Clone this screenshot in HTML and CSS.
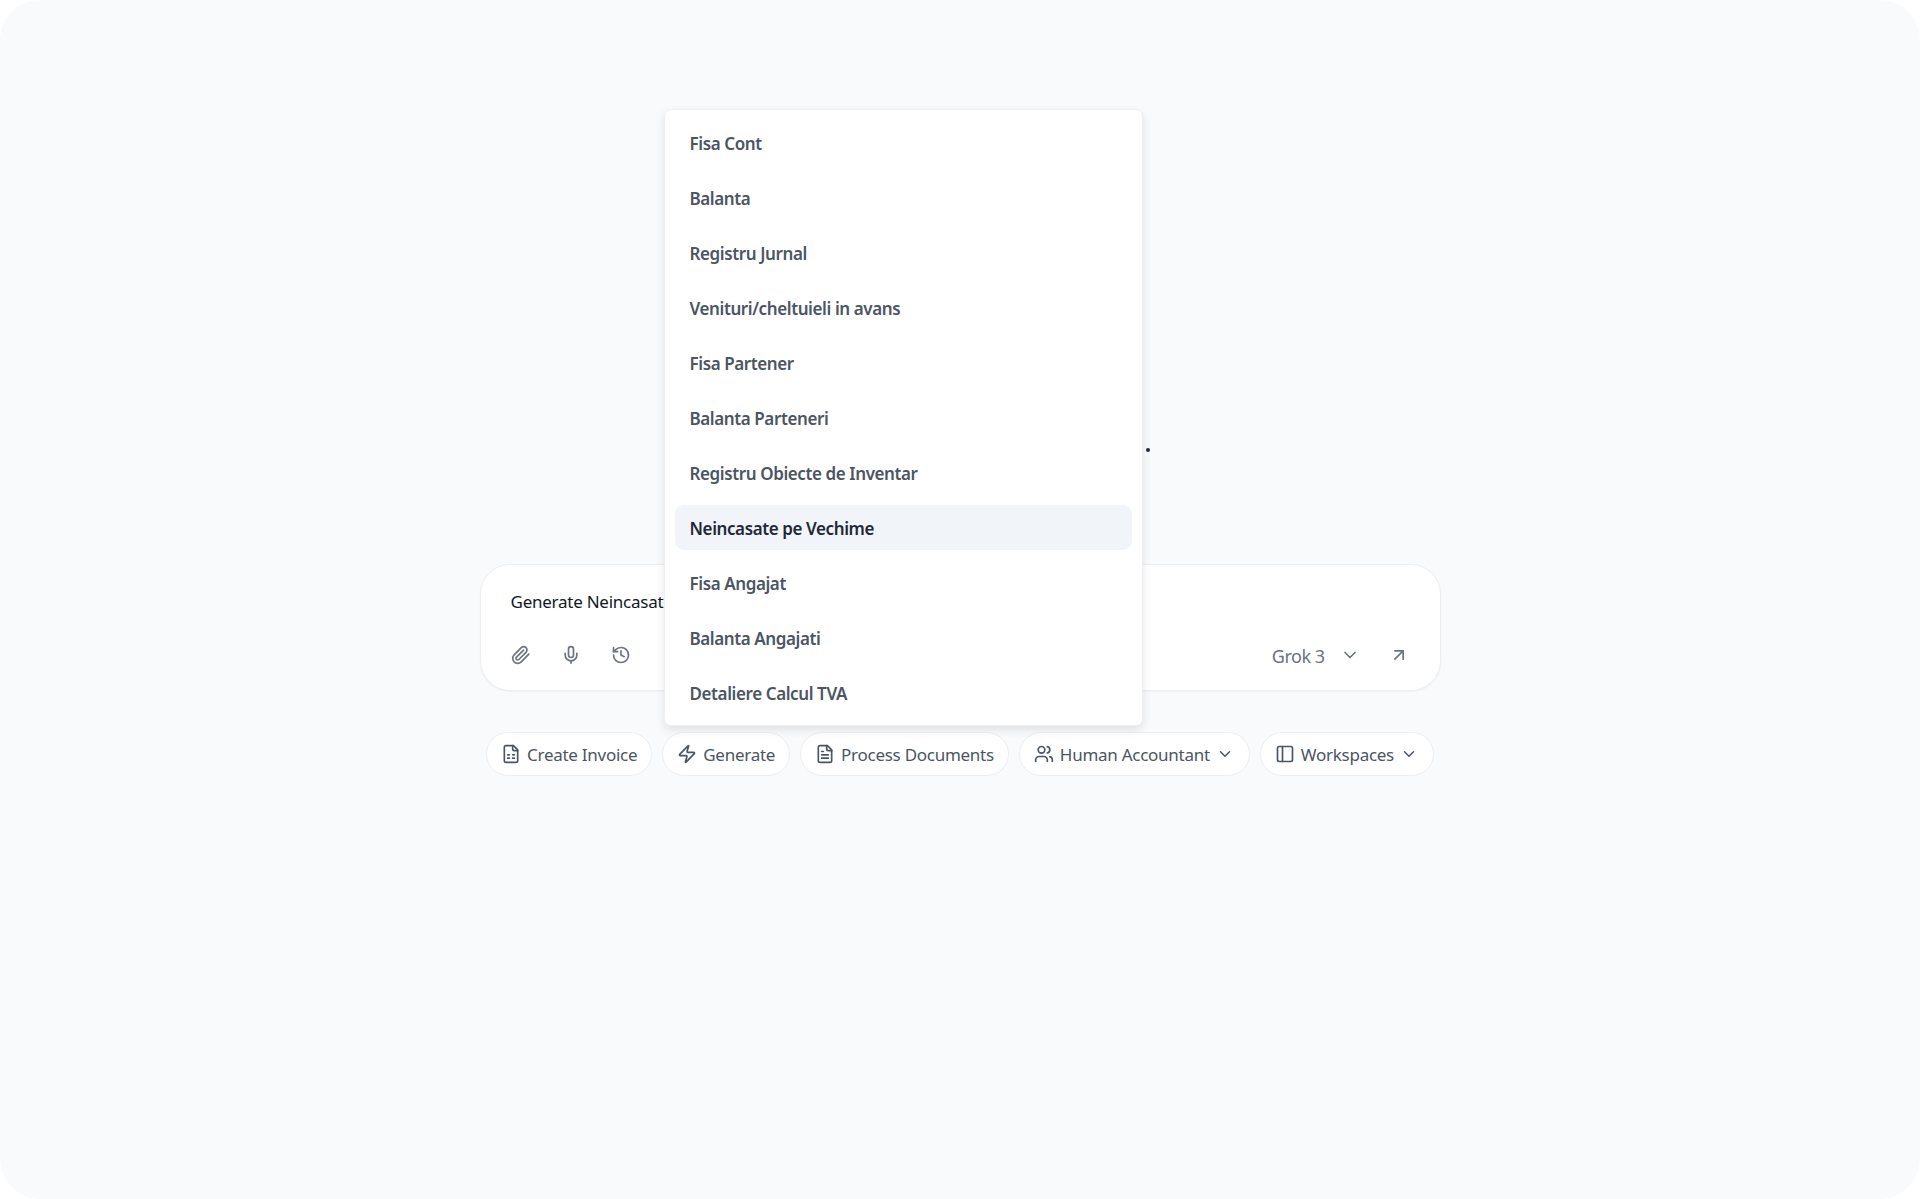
FILE: index.html
```html
<!DOCTYPE html>
<html lang="en">
<head>
<meta charset="utf-8">
<title>Generate</title>
<link rel="stylesheet" href="styles.css">
</head>
<body>
<div class="screen">
  <span class="dot"></span>
  <main class="composer-wrap">
    <section class="card">
      <p class="prompt">Generate Neincasate pe Vechime</p>
      <div class="tools">
        <div class="tools-left">
          <svg class="icon tool" viewBox="0 0 24 24"><path d="m21.44 11.05-9.19 9.19a6 6 0 0 1-8.49-8.49l8.57-8.57A4 4 0 1 1 18 8.84l-8.59 8.57a2 2 0 0 1-2.83-2.83l8.49-8.48"/></svg>
          <svg class="icon tool" viewBox="0 0 24 24"><path d="M12 2a3 3 0 0 0-3 3v7a3 3 0 0 0 6 0V5a3 3 0 0 0-3-3Z"/><path d="M19 10v2a7 7 0 0 1-14 0v-2"/><path d="M12 19v3"/></svg>
          <svg class="icon tool" viewBox="0 0 24 24"><path d="M3 12a9 9 0 1 0 9-9 9.75 9.75 0 0 0-6.74 2.74L3 8"/><path d="M3 3v5h5"/><path d="M12 7v5l4 2"/></svg>
        </div>
        <div class="tools-right">
          <span class="model">Grok 3</span>
          <svg class="icon chev-model" viewBox="0 0 24 24"><path d="m6 9 6 6 6-6"/></svg>
          <svg class="icon send" viewBox="0 0 24 24"><path d="M7 7h10v10"/><path d="M7 17 17 7"/></svg>
        </div>
      </div>
    </section>

    <nav class="chips">
      <button class="chip"><svg class="icon" viewBox="0 0 24 24"><path d="M15 2H6a2 2 0 0 0-2 2v16a2 2 0 0 0 2 2h12a2 2 0 0 0 2-2V7Z"/><path d="M14 2v4a2 2 0 0 0 2 2h4"/><path d="M8 13h2"/><path d="M14 13h2"/><path d="M8 17h2"/><path d="M14 17h2"/></svg>Create Invoice</button>
      <button class="chip"><svg class="icon" viewBox="0 0 24 24"><path d="M4 14a1 1 0 0 1-.78-1.63l9.9-10.2a.5.5 0 0 1 .86.46l-1.92 6.02A1 1 0 0 0 13 10h7a1 1 0 0 1 .78 1.63l-9.9 10.2a.5.5 0 0 1-.86-.46l1.92-6.02A1 1 0 0 0 11 14z"/></svg>Generate</button>
      <button class="chip"><svg class="icon" viewBox="0 0 24 24"><path d="M15 2H6a2 2 0 0 0-2 2v16a2 2 0 0 0 2 2h12a2 2 0 0 0 2-2V7Z"/><path d="M14 2v4a2 2 0 0 0 2 2h4"/><path d="M10 9H8"/><path d="M16 13H8"/><path d="M16 17H8"/></svg>Process Documents</button>
      <button class="chip"><svg class="icon" viewBox="0 0 24 24"><path d="M16 21v-2a4 4 0 0 0-4-4H6a4 4 0 0 0-4 4v2"/><circle cx="9" cy="7" r="4"/><path d="M22 21v-2a4 4 0 0 0-3-3.87"/><path d="M16 3.13a4 4 0 0 1 0 7.75"/></svg>Human Accountant<svg class="icon chev" viewBox="0 0 24 24"><path d="m6 9 6 6 6-6"/></svg></button>
      <button class="chip"><svg class="icon" viewBox="0 0 24 24"><rect x="3" y="3" width="18" height="18" rx="2"/><path d="M9 3v18"/></svg>Workspaces<svg class="icon chev" viewBox="0 0 24 24"><path d="m6 9 6 6 6-6"/></svg></button>
    </nav>

    <ul class="menu">
      <li class="item">Fisa Cont</li>
      <li class="item">Balanta</li>
      <li class="item">Registru Jurnal</li>
      <li class="item">Venituri/cheltuieli in avans</li>
      <li class="item">Fisa Partener</li>
      <li class="item">Balanta Parteneri</li>
      <li class="item">Registru Obiecte de Inventar</li>
      <li class="item active">Neincasate pe Vechime</li>
      <li class="item">Fisa Angajat</li>
      <li class="item">Balanta Angajati</li>
      <li class="item">Detaliere Calcul TVA</li>
    </ul>
  </main>
</div>
</body>
</html>
```

FILE: styles.css
```css
* { box-sizing: border-box; }
html, body { margin: 0; padding: 0; background: #fff; }
body { font-family: "Noto Sans", "Liberation Sans", sans-serif; }

.screen {
  position: relative;
  width: 1920px;
  height: 1199px;
  background: #f9fafb;
  border-radius: 40px;
  overflow: hidden;
  padding-top: 564px;
}

.dot {
  position: absolute;
  left: 1146px;
  top: 448px;
  width: 4px;
  height: 4px;
  border-radius: 50%;
  background: #1f2937;
}

.composer-wrap {
  width: 961px;
  margin: 0 auto;
  position: relative;
}

.card {
  height: 127px;
  background: #fff;
  border: 1px solid #eceef1;
  border-radius: 30px;
  box-shadow: 0 1px 2px rgba(0, 0, 0, 0.04);
  padding: 25px 30px 0;
}

.prompt {
  margin: 0;
  font-size: 17px;
  letter-spacing: -0.25px;
  line-height: 24px;
  color: #111827;
  white-space: nowrap;
}

.tools {
  display: flex;
  justify-content: space-between;
  align-items: center;
  margin-top: 26px;
  height: 30px;
}

.tools-left { display: flex; align-items: center; gap: 30px; }
.tools-right { display: flex; align-items: center; }

.icon {
  width: 20px;
  height: 20px;
  fill: none;
  stroke: currentColor;
  stroke-width: 2;
  stroke-linecap: round;
  stroke-linejoin: round;
  flex: none;
}

.tool { color: #6b7280; }

.model { font-size: 18px; letter-spacing: -0.5px; padding-top: 2px; color: #6b7280; }
.chev-model { color: #6b7280; margin-left: 15px; }
.send { color: #6b7280; margin-left: 29px; margin-right: 1px; }

.chips {
  display: flex;
  justify-content: center;
  gap: 10px;
  margin-top: 41px;
}

.chip {
  display: flex;
  align-items: center;
  gap: 6px;
  height: 44px;
  padding: 0 14px;
  border: 1px solid #eceef1;
  border-radius: 22px;
  background: #fff;
  font-family: inherit;
  font-size: 17px;
  letter-spacing: -0.27px;
  color: #4b5563;
  white-space: nowrap;
}

.chip .chev { margin-right: 1px; width: 18px; height: 18px; }

.menu {
  position: absolute;
  left: 184px;
  top: -455px;
  width: 479px;
  height: 617px;
  margin: 0;
  padding: 10px 10px;
  list-style: none;
  display: flex;
  flex-direction: column;
  gap: 10px;
  background: #fff;
  border: 1px solid #eef0f2;
  border-radius: 7px;
  box-shadow: 0 4px 10px rgba(0, 0, 0, 0.1);
}

.item {
  height: 45px;
  flex: none;
  display: flex;
  align-items: center;
  padding: 2px 15px 0;
  border-radius: 9px;
  font-size: 17px;
  letter-spacing: -0.4px;
  font-weight: 600;
  color: #4b5563;
}

.item.active { background: #f1f4f8; color: #1f2937; }
```
